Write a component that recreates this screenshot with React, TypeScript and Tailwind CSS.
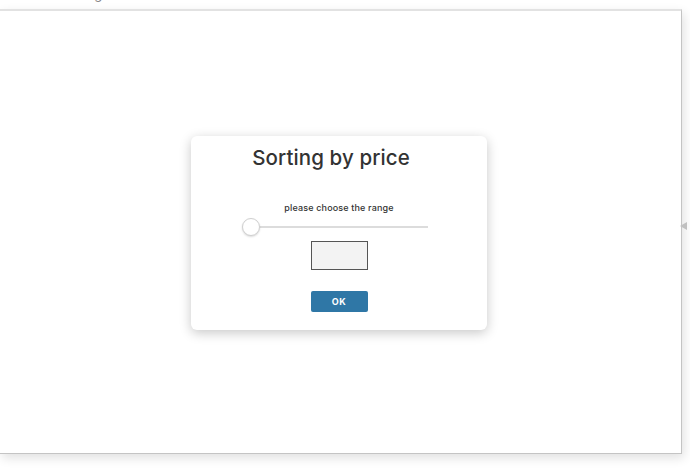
import React from "react";

export default function App() {
  return (
    <div className="relative w-[690px] h-[476px] bg-white overflow-hidden" style={{ fontFamily: "Inter, 'Liberation Sans', sans-serif" }}>
      <div className="absolute left-[58px] top-[-14px] text-[13px] leading-[16px] text-[#888]">Sorting</div>
      <div className="mt-[9px] w-[682px] h-[445px] bg-white border-t-2 border-t-[#e2e2e2] border-r border-r-[#c4c4c4] border-b border-b-[#c4c4c4] shadow-[2px_4px_10px_rgba(0,0,0,0.12)] flex items-start justify-center">
        <div className="mt-[125px] ml-[-3px] w-[296px] h-[194px] bg-white rounded-[6px] shadow-[0_3px_12px_rgba(0,0,0,0.22)] flex flex-col items-center">
          <h1 className="mt-[8px] mr-[16px] text-[20.5px] leading-[28px] font-medium text-[#333] tracking-[0.1px]">Sorting by price</h1>
          <p className="mt-[29px] text-[9px] leading-[14px] font-medium text-[#333] tracking-[0.15px]">please choose the range</p>
          <div className="relative mt-[2px] mr-[8px] w-[186px] h-[20px] flex items-center">
            <div className="ml-[8px] w-[178px] h-[2px] bg-[#dcdcdc]" />
            <div className="absolute left-0 top-[1px] w-[18px] h-[18px] rounded-full bg-white border border-[#d0d0d0] shadow-[0_1px_2px_rgba(0,0,0,0.15)]" />
          </div>
          <div className="mt-[4px] w-[57px] h-[29px] bg-[#f3f3f3] border border-[#555]" />
          <button className="mt-[21px] w-[57px] h-[21px] bg-[#2f77a6] rounded-[2px] text-white text-[9px] font-bold tracking-[0.5px]">OK</button>
        </div>
      </div>
      <div className="absolute left-[680px] top-[222px] w-0 h-0 border-t-[4px] border-t-transparent border-b-[4px] border-b-transparent border-r-[7px] border-r-[#c0c0c0]" />
    </div>
  );
}
